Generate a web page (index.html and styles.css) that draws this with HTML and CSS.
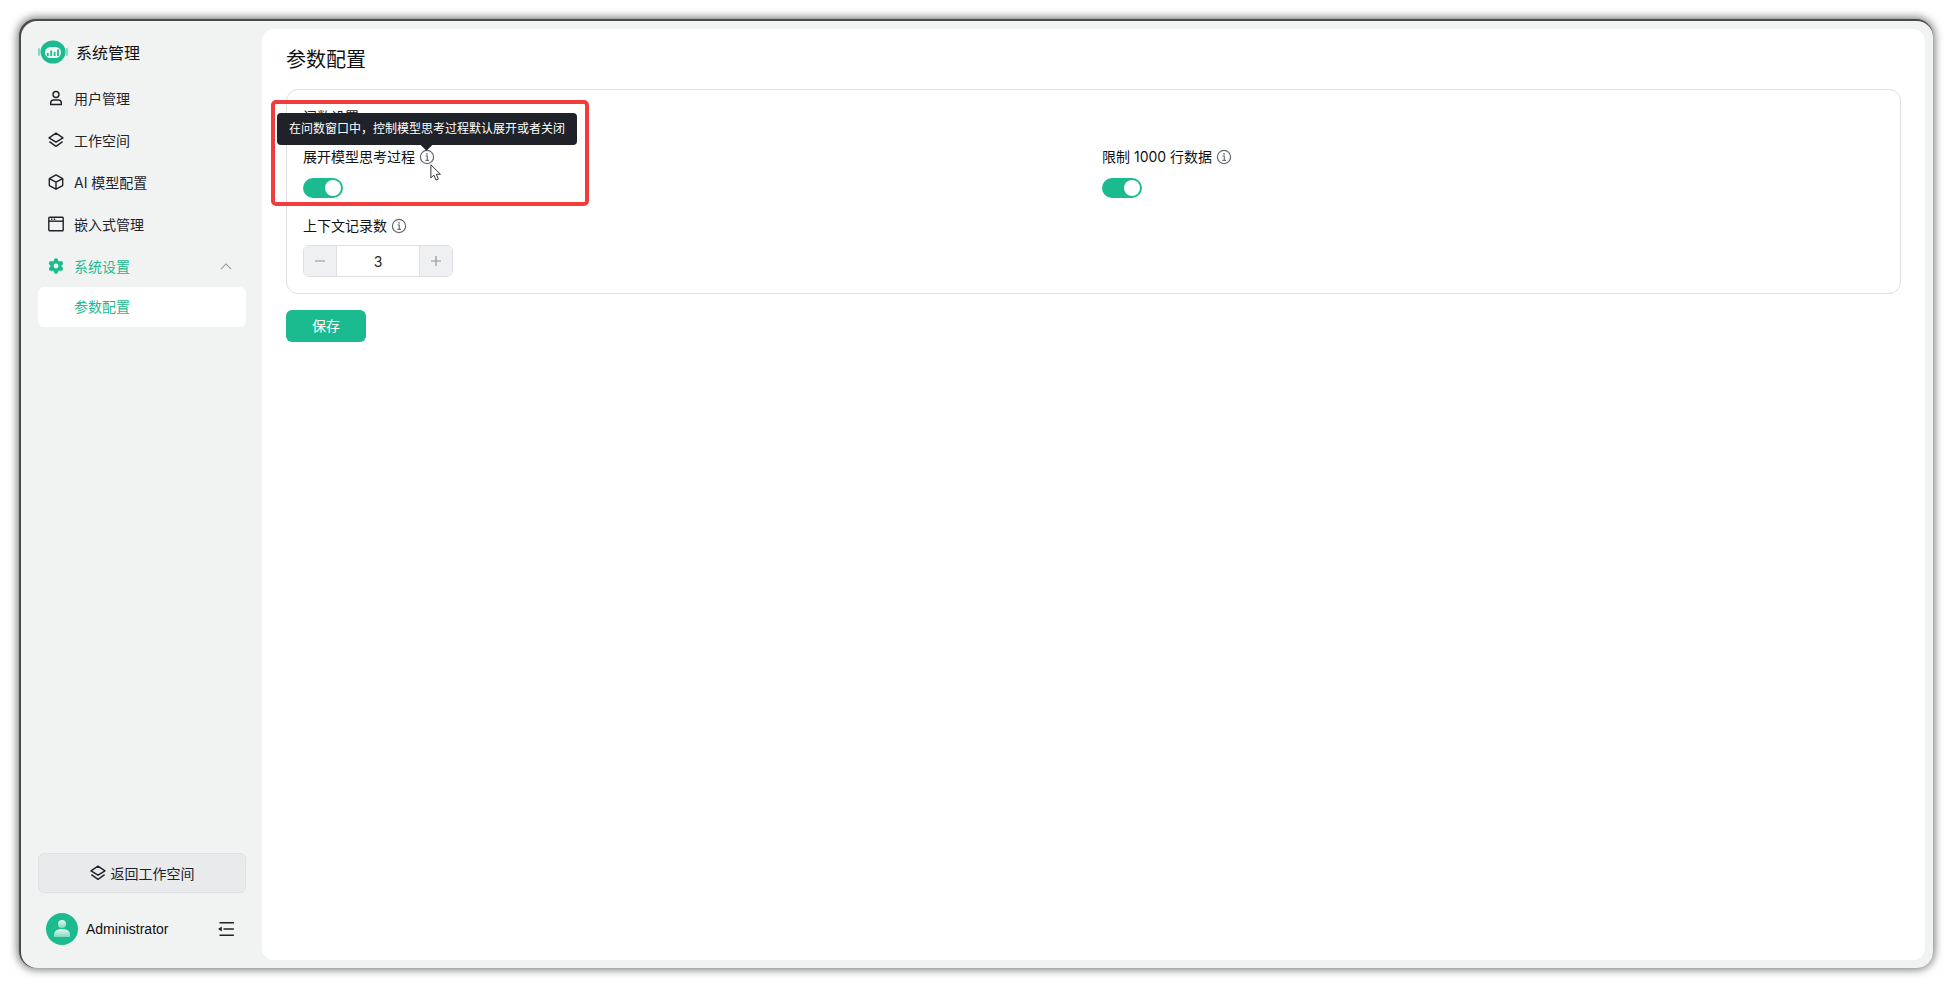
FILE: index.html
```html
<!DOCTYPE html>
<html lang="zh-CN">
<head>
<meta charset="utf-8">
<title>参数配置</title>
<link rel="stylesheet" href="styles.css">
</head>
<body>
<div class="window">
  <aside class="sidebar">
    <div class="brand">
      <svg class="logo" viewBox="0 0 30 24"><rect x="0" y="8" width="2" height="8" rx="1" fill="#7fdcc2"/><rect x="28" y="8" width="2" height="8" rx="1" fill="#7fdcc2"/><ellipse cx="15" cy="12" rx="12.5" ry="11.5" fill="#1cbb8f"/><rect x="7" y="7" width="16" height="11" rx="5.5" fill="#eef9f6"/><path d="M9.8 16v-3M13.2 16v-5.5M16.6 16v-4M20 16v-6.5" stroke="#1cbb8f" stroke-width="1.8"/></svg>
      <span class="brand-name">系统管理</span>
    </div>
    <nav class="nav">
      <a class="nav-item"><svg class="icon" viewBox="0 0 16 16" fill="none" stroke="#1f2329" stroke-width="1.4"><circle cx="8" cy="4.5" r="3"/><path d="M2.7 14.5h10.6v-1.6c0-1.6-1.3-2.9-2.9-2.9H5.6c-1.6 0-2.9 1.3-2.9 2.9z"/></svg><span>用户管理</span></a>
      <a class="nav-item"><svg class="icon" viewBox="0 0 16 16" fill="none" stroke="#1f2329" stroke-width="1.4" stroke-linejoin="round"><path d="M8 1.2 15 5.8 8 10.2 1 5.8z"/><path d="M1.4 9.6 8 14.4l6.6-4.8"/></svg><span>工作空间</span></a>
      <a class="nav-item"><svg class="icon" viewBox="0 0 16 16" fill="none" stroke="#1f2329" stroke-width="1.4" stroke-linejoin="round"><path d="M8 .9 14.7 4.6v7L8 15.2 1.3 11.6v-7z"/><path d="M1.3 4.6 8 8.2l6.7-3.6M8 8.2v7"/></svg><span>AI 模型配置</span></a>
      <a class="nav-item"><svg class="icon" viewBox="0 0 16 16" fill="none" stroke="#1f2329" stroke-width="1.4"><rect x=".8" y="1.2" width="14.4" height="13.6" rx=".8"/><path d="M.8 5.2h14.4"/><path d="M3 3.2h1.4M5.8 3.2h1.4" stroke-width="1.4"/></svg><span>嵌入式管理</span></a>
      <a class="nav-item nav-active"><svg class="icon" viewBox="0 0 16 16"><g fill="#1cbb8f"><circle cx="8" cy="8" r="5.6"/><circle cx="8" cy="2.4" r="2.2"/><circle cx="8" cy="13.6" r="2.2"/><circle cx="3.15" cy="5.2" r="2.2"/><circle cx="12.85" cy="5.2" r="2.2"/><circle cx="3.15" cy="10.8" r="2.2"/><circle cx="12.85" cy="10.8" r="2.2"/></g><circle cx="8" cy="8" r="2.4" fill="#f1f3f3"/></svg><span>系统设置</span><svg class="chevron" viewBox="0 0 14 8" fill="none" stroke="#8f959e" stroke-width="1.2"><path d="M1 7l6-6 6 6"/></svg></a>
      <a class="sub-item"><span class="lift">参数配置</span></a>
    </nav>
    <div class="side-bottom">
      <button class="back-btn"><svg class="icon" viewBox="0 0 16 16" fill="none" stroke="#1f2329" stroke-width="1.4" stroke-linejoin="round"><path d="M8 1.2 15 5.8 8 10.2 1 5.8z"/><path d="M1.4 9.6 8 14.4l6.6-4.8"/></svg><span>返回工作空间</span></button>
      <div class="user">
        <svg class="avatar" viewBox="0 0 32 32"><defs><linearGradient id="ag" x1="0" y1="0" x2="0" y2="1"><stop offset="0" stop-color="#e4f7f1"/><stop offset="1" stop-color="#7fd9bf"/></linearGradient></defs><circle cx="16" cy="16" r="16" fill="#1cbb8f"/><circle cx="16" cy="11" r="4" fill="url(#ag)"/><path d="M8 22c0-4 3-6 8-6s8 2 8 6v2H8z" fill="url(#ag)"/></svg>
        <span class="user-name">Administrator</span>
        <svg class="collapse" viewBox="0 0 16 14" fill="none" stroke="#1f2329" stroke-width="1.5"><path d="M1.5 .8h14.4M5.5 7h10.4M1.5 13.2h14.4"/><path d="M0 7l3.8-2.6v5.2z" fill="#1f2329" stroke="none"/></svg>
      </div>
    </div>
  </aside>
  <main class="main">
    <h1 class="page-title">参数配置</h1>
    <section class="card">
      <div class="card-title">问数设置</div>
      <div class="grid">
        <div class="field">
          <label class="field-label">展开模型思考过程<svg class="info" viewBox="0 0 16 16" fill="none" stroke="#646a73"><circle cx="8" cy="8" r="6.6" stroke-width="1.2"/><path d="M6.5 7h1.8v4.4M6.4 11.4h3.6" stroke-width="1.1"/><circle cx="8" cy="4.9" r=".8" fill="#646a73" stroke="none"/></svg></label>
          <div class="switch"><span class="knob"></span></div>
        </div>
        <div class="field">
          <label class="field-label">限制 1000 行数据<svg class="info" viewBox="0 0 16 16" fill="none" stroke="#646a73"><circle cx="8" cy="8" r="6.6" stroke-width="1.2"/><path d="M6.5 7h1.8v4.4M6.4 11.4h3.6" stroke-width="1.1"/><circle cx="8" cy="4.9" r=".8" fill="#646a73" stroke="none"/></svg></label>
          <div class="switch"><span class="knob"></span></div>
        </div>
        <div class="field">
          <label class="field-label">上下文记录数<svg class="info" viewBox="0 0 16 16" fill="none" stroke="#646a73"><circle cx="8" cy="8" r="6.6" stroke-width="1.2"/><path d="M6.5 7h1.8v4.4M6.4 11.4h3.6" stroke-width="1.1"/><circle cx="8" cy="4.9" r=".8" fill="#646a73" stroke="none"/></svg></label>
          <div class="stepper"><span class="step"><svg class="step-icon" viewBox="0 0 10 10" fill="none" stroke="#8f959e" stroke-width="1.2"><path d="M0 5h10"/></svg></span><span class="step-value">3</span><span class="step"><svg class="step-icon" viewBox="0 0 10 10" fill="none" stroke="#8f959e" stroke-width="1.2"><path d="M0 5h10M5 0v10"/></svg></span></div>
        </div>
      </div>
    </section>
    <button class="save"><span class="lift">保存</span></button>
    <div class="tooltip">在问数窗口中，控制模型思考过程默认展开或者关闭<i class="arrow"></i></div>
    <div class="highlight"></div>
    <svg class="cursor" viewBox="0 0 13 20"><path d="M.8.8v14.6l3.4-3 2.3 5.5 2.6-1.1-2.3-5.4h4.6z" fill="#fff" stroke="#1f2329" stroke-width="1"/></svg>
  </main>
</div>
</body>
</html>
```
FILE: styles.css
```css
* { box-sizing: border-box; }
html, body { margin: 0; height: 100%; }
body {
  background: #fff;
  padding: 21px 20px 20px 21px;
  font-family: Inter, "Noto Sans CJK SC", sans-serif;
  font-size: 14px;
  color: #1f2329;
}
.window {
  height: 100%;
  display: flex;
  background: #f1f3f3;
  border-radius: 16px;
  box-shadow: -1px -1px 0 1px #4a4a4a, -1px -1px 10px 2px rgba(0,0,0,.6);
  padding: 8px 8px 8px 0;
}
.sidebar { width: 241px; flex: none; display: flex; flex-direction: column; margin-top: -8px; margin-bottom: -8px; padding: 17px 16px 23px 17px; }
.brand { display: flex; align-items: center; height: 28px; gap: 8px; }
.logo { width: 30px; height: 24px; }
.brand-name { font-size: 16px; color: #111; }
.nav { margin-top: 11px; display: flex; flex-direction: column; }
.nav-item { height: 42px; display: flex; align-items: center; padding-left: 10px; gap: 10px; white-space: nowrap; }
.icon { width: 16px; height: 16px; flex: none; }
.nav-active { color: #1cbb8f; }
.chevron { width: 12px; height: 7px; margin-left: auto; margin-right: 14px; }
.sub-item { height: 40px; display: flex; align-items: center; padding-left: 36px; background: #fff; border-radius: 6px; color: #1cbb8f; }
.lift { display: block; margin-top: -2px; }
.side-bottom { margin-top: auto; }
.back-btn { width: 100%; height: 40px; display: flex; align-items: center; justify-content: center; gap: 5px; background: #e8eaeb; border: 1px solid #dee0e3; border-radius: 6px; font: inherit; color: #1f2329; }
.user { display: flex; align-items: center; height: 32px; margin-top: 20px; padding-left: 8px; }
.avatar { width: 32px; height: 32px; }
.user-name { margin-left: 8px; color: #111; font-family: "Liberation Sans", sans-serif; }
.collapse { width: 16px; height: 14px; margin-left: auto; margin-right: 12px; }
.main { flex: 1; background: #fff; border-radius: 12px; padding: 17px 24px 16px; position: relative; }
.page-title { margin: 0; height: 28px; font-size: 20px; font-weight: 400; line-height: 28px; color: #111; }
.card { margin-top: 15px; height: 205px; border: 1px solid #dee0e3; border-radius: 12px; padding: 16px; }
.card-title { font-size: 14px; line-height: 22px; color: #1f2329; }
.grid { display: grid; grid-template-columns: 799px 1fr; }
.field { height: 69px; padding-top: 18px; }
.field-label { display: flex; align-items: center; line-height: 22px; color: #111; }
.info { width: 16px; height: 16px; margin-left: 4px; }
.switch { width: 40px; height: 20px; margin-top: 10px; background: #1cbb8f; border-radius: 10px; padding: 2px 2px 2px 22px; }
.knob { display: block; width: 16px; height: 16px; border-radius: 50%; background: #fff; }
.stepper { display: flex; width: 150px; height: 32px; margin-top: 8px; border: 1px solid #dee0e3; border-radius: 6px; overflow: hidden; }
.step { width: 32px; display: flex; align-items: center; justify-content: center; background: #eff0f1; }
.step-icon { width: 10px; height: 10px; }
.step-value { flex: 1; display: flex; align-items: center; justify-content: center; border-left: 1px solid #dee0e3; border-right: 1px solid #dee0e3; }
.save { display: block; width: 80px; height: 32px; margin-top: 16px; background: #1cbb8f; border: 0; border-radius: 6px; color: #fff; font: inherit; }
.tooltip { position: absolute; left: 15px; top: 84px; height: 32px; width: 300px; padding: 0 12px; background: #1f2329; color: #fff; font-size: 12px; line-height: 32px; border-radius: 4px; white-space: nowrap; }
.arrow { position: absolute; left: 145px; bottom: -4px; width: 9px; height: 9px; background: #1f2329; transform: rotate(45deg); }
.highlight { position: absolute; left: 9px; top: 71px; width: 318px; height: 106px; border: 4px solid #f23c3c; border-radius: 5px; }
.cursor { position: absolute; left: 168px; top: 135px; width: 12px; height: 18px; }
```
